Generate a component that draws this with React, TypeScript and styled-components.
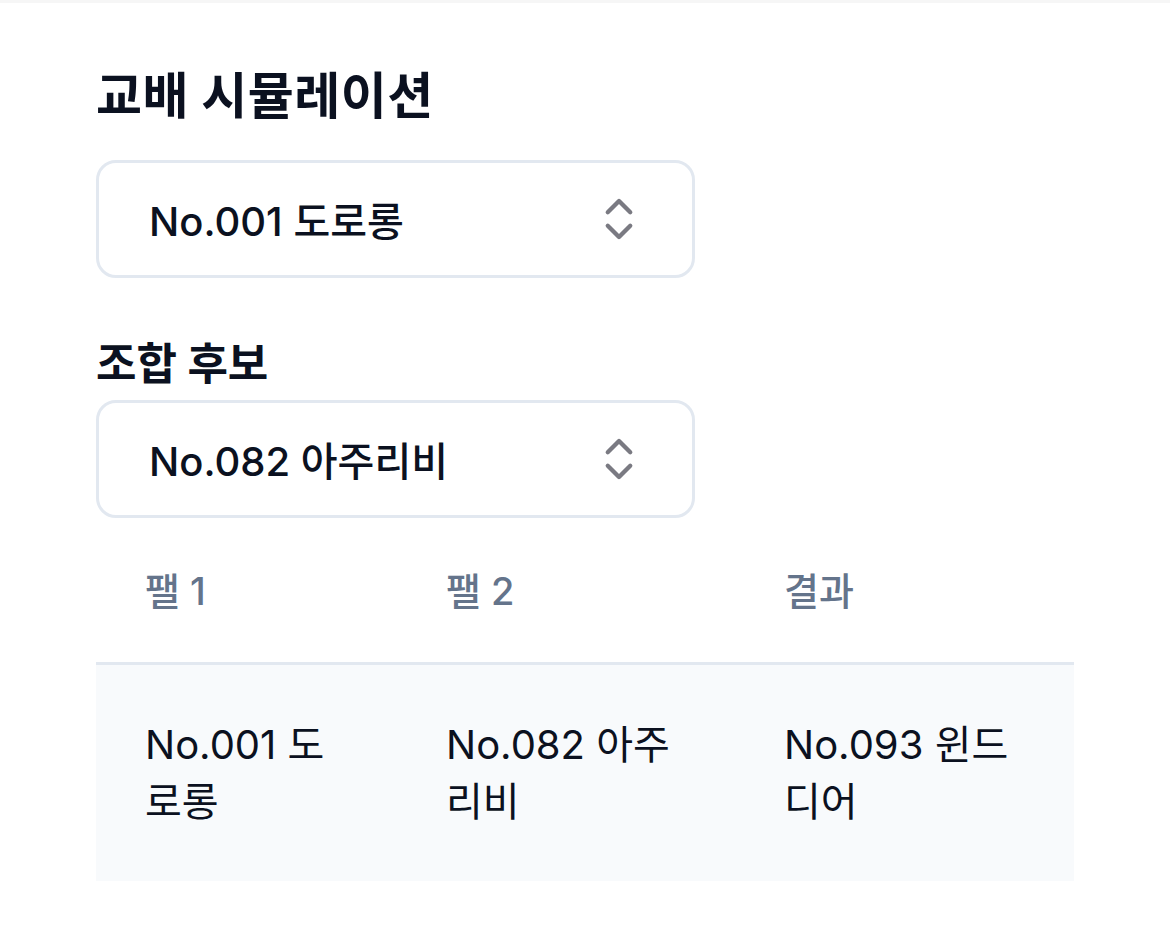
import styled, { createGlobalStyle } from "styled-components";

const GlobalStyle = createGlobalStyle`
	body {
		margin: 0;
		background: #ffffff;
		font-family: "Inter", "Noto Sans CJK KR", sans-serif;
		color: #0b1120;
	}
`;

const Page = styled.div`
	border-top: 3px solid #f6f6f6;
	padding: 59px 96px 40px;
`;

const Title = styled.h1`
	margin: 0 0 30px;
	font-size: 50px;
	line-height: 68px;
	font-weight: 700;
	letter-spacing: 0.5px;
`;

const Label = styled.h2`
	margin: 56px 0 6px;
	font-size: 44px;
	line-height: 60px;
	font-weight: 700;
`;

const Select = styled.div`
	box-sizing: border-box;
	width: 599px;
	height: 118px;
	display: flex;
	align-items: center;
	justify-content: space-between;
	padding: 0 46px 0 50px;
	border: 3px solid #e2e8f0;
	border-radius: 20px;
	font-size: 40px;
	font-weight: 500;
`;

const Table = styled.div`
	margin-top: 3px;
	width: 978px;
	display: grid;
	grid-template-columns: 301px 338px 339px;
`;

const HeadCell = styled.div`
	padding: 42px 49px;
	font-size: 38px;
	line-height: 57px;
	font-weight: 500;
	color: #64748b;
	border-bottom: 3px solid #e2e8f0;
`;

const Cell = styled.div`
	padding: 51px 49px;
	font-size: 40px;
	line-height: 57px;
	background: #f8fafc;
	word-break: break-all;
`;

const UpDown = () => (
	<svg width="54" height="54" viewBox="0 0 24 24" fill="none" stroke="#7a7a82" strokeWidth="1.9" strokeLinecap="round" strokeLinejoin="round">
		<path d="m7 15 5 5 5-5" />
		<path d="m7 9 5-5 5 5" />
	</svg>
);

const rows = [["No.001 도로롱", "No.082 아주리비", "No.093 윈드디어"]];

export default function App() {
	return (
		<Page>
			<GlobalStyle />
			<Title>교배 시뮬레이션</Title>
			<Select>
				<span>No.001 도로롱</span>
				<UpDown />
			</Select>
			<Label>조합 후보</Label>
			<Select>
				<span>No.082 아주리비</span>
				<UpDown />
			</Select>
			<Table>
				<HeadCell>팰 1</HeadCell>
				<HeadCell>팰 2</HeadCell>
				<HeadCell>결과</HeadCell>
				{rows.map((r) => r.map((c, i) => <Cell key={i}>{c}</Cell>))}
			</Table>
		</Page>
	);
}
